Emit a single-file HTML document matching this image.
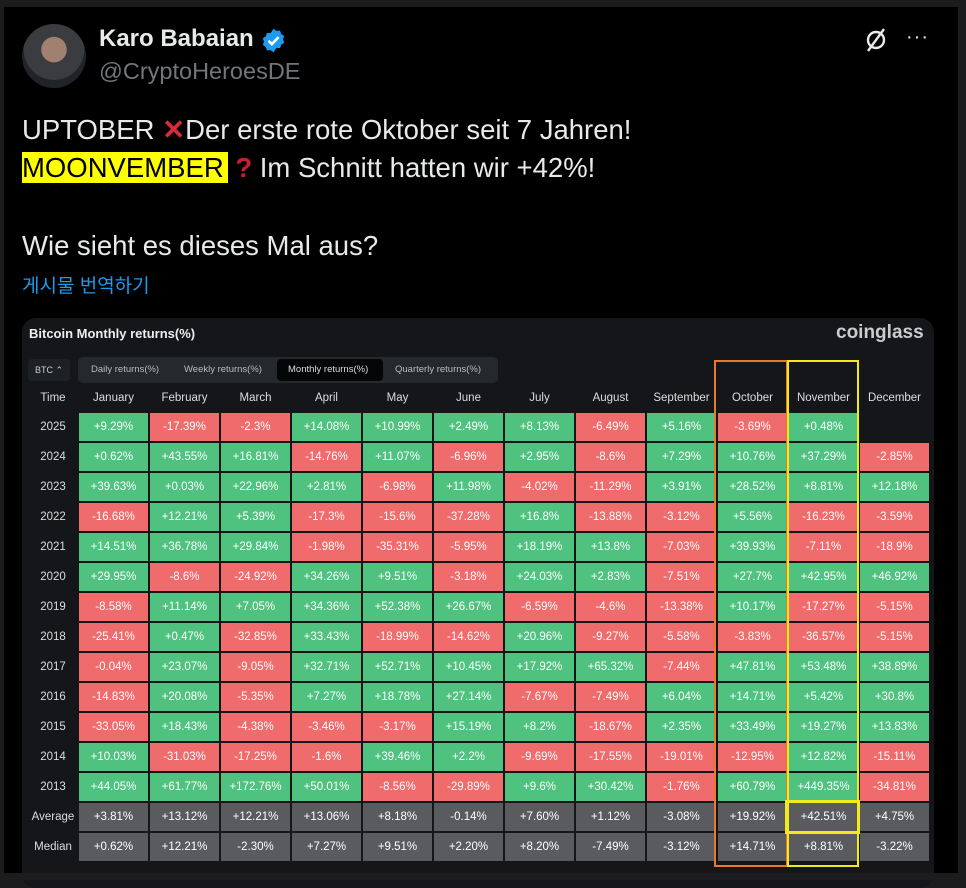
<!DOCTYPE html><html><head><meta charset="utf-8"><style>
body{margin:0;width:966px;height:880px;background:#1c1c1e;overflow:hidden;font-family:"Liberation Sans","Noto Sans CJK KR",sans-serif;position:relative}
#main{position:absolute;left:4px;top:7px;width:954px;height:866px;background:#000}
.a{position:absolute}
.t{color:#e7e9ea;font-size:27.5px;white-space:nowrap}
#card{position:absolute;left:22px;top:318px;width:912px;height:570px;background:#141619;border-radius:14px}
.row{position:absolute;left:28px;height:30px;display:flex}
.row div{width:69px;height:28px;margin:1px;line-height:28px;text-align:center;color:#fff;font-size:11.5px}
.row div:first-child{width:48px;color:#ddd;font-size:11.5px}
.g{background:#4ec27e}.r{background:#f06b6b}.n{background:#5a5b5f}
.hd div{color:#ddd!important;font-size:11.5px}
</style></head><body>
<div id="main"></div>
<div class="a" style="left:22px;top:24px;width:64px;height:64px;border-radius:50%;background:radial-gradient(circle at 50% 40%,#a08070 0 25%,#3a3c40 26% 60%,#202428 61%)"></div>
<div class="a" style="left:99px;top:25px;color:#e7e9ea;font-size:24px;font-weight:bold">Karo Babaian</div>
<svg class="a" style="left:260px;top:27px" width="27" height="27" viewBox="0 0 24 24"><path fill="#1d9bf0" d="M12 1.5l2.6 1.9 3.2-.2 1 3 2.7 1.8-1 3 1 3-2.7 1.8-1 3-3.2-.2L12 22.5l-2.6-1.9-3.2.2-1-3L2.5 16l1-3-1-3 2.7-1.8 1-3 3.2.2z"/><path d="M7.5 12.2l3 3 6-6.2" stroke="#fff" stroke-width="2.3" fill="none"/></svg>
<div class="a" style="left:99px;top:58px;color:#71767b;font-size:23.5px">@CryptoHeroesDE</div>
<svg class="a" style="left:862px;top:26px" width="28" height="28" viewBox="0 0 28 28"><circle cx="14" cy="14" r="8" stroke="#e7e9ea" stroke-width="2.4" fill="none"/><path d="M22 3L6 25" stroke="#e7e9ea" stroke-width="2.4"/></svg>
<div class="a" style="left:906px;top:26px;color:#e7e9ea;font-size:20px;letter-spacing:1px">···</div>
<div class="a t" style="left:22px;top:114px">UPTOBER <span style="color:#e0283c;font-weight:bold">✕</span>Der erste rote Oktober seit 7 Jahren!</div>
<div class="a t" style="left:22px;top:152px"><span style="background:#ffff00;color:#000;padding:0 4px 0 0">MOONVEMBER</span> <span style="color:#c81e33;font-weight:bold">?</span> Im Schnitt hatten wir +42%!</div>
<div class="a t" style="left:22px;top:230px">Wie sieht es dieses Mal aus?</div>
<div class="a" style="left:22px;top:271px;color:#1d9bf0;font-size:19px">게시물 번역하기</div>
<div id="card"></div>
<div class="a" style="left:29px;top:326px;color:#eee;font-size:13px;font-weight:bold">Bitcoin Monthly returns(%)</div>
<div class="a" style="left:836px;top:322px;color:#ccc;font-size:19px;font-weight:bold">coinglass</div>
<div class="a" style="left:28px;top:359px;width:42px;height:22px;border-radius:4px;background:#1d2024;color:#ccc;font-size:9px;line-height:22px;text-align:center">BTC ⌃</div>
<div class="a" style="left:78px;top:357px;width:420px;height:26px;border-radius:5px;background:#25282d"></div>
<div class="a" style="left:277px;top:359px;width:106px;height:22px;border-radius:4px;background:#050607"></div>
<div class="a" style="left:91px;top:364px;color:#bbb;font-size:9.5px">Daily returns(%)</div>
<div class="a" style="left:184px;top:364px;color:#bbb;font-size:9.5px">Weekly returns(%)</div>
<div class="a" style="left:288px;top:364px;color:#ddd;font-size:9.5px">Monthly returns(%)</div>
<div class="a" style="left:395px;top:364px;color:#bbb;font-size:9.5px">Quarterly returns(%)</div>
<div class="row hd" style="top:383px"><div>Time</div><div>January</div><div>February</div><div>March</div><div>April</div><div>May</div><div>June</div><div>July</div><div>August</div><div>September</div><div>October</div><div>November</div><div>December</div></div>
<div class="row" style="top:412px"><div>2025</div><div class="g">+9.29%</div><div class="r">-17.39%</div><div class="r">-2.3%</div><div class="g">+14.08%</div><div class="g">+10.99%</div><div class="g">+2.49%</div><div class="g">+8.13%</div><div class="r">-6.49%</div><div class="g">+5.16%</div><div class="r">-3.69%</div><div class="g">+0.48%</div><div></div></div>
<div class="row" style="top:442px"><div>2024</div><div class="g">+0.62%</div><div class="g">+43.55%</div><div class="g">+16.81%</div><div class="r">-14.76%</div><div class="g">+11.07%</div><div class="r">-6.96%</div><div class="g">+2.95%</div><div class="r">-8.6%</div><div class="g">+7.29%</div><div class="g">+10.76%</div><div class="g">+37.29%</div><div class="r">-2.85%</div></div>
<div class="row" style="top:472px"><div>2023</div><div class="g">+39.63%</div><div class="g">+0.03%</div><div class="g">+22.96%</div><div class="g">+2.81%</div><div class="r">-6.98%</div><div class="g">+11.98%</div><div class="r">-4.02%</div><div class="r">-11.29%</div><div class="g">+3.91%</div><div class="g">+28.52%</div><div class="g">+8.81%</div><div class="g">+12.18%</div></div>
<div class="row" style="top:502px"><div>2022</div><div class="r">-16.68%</div><div class="g">+12.21%</div><div class="g">+5.39%</div><div class="r">-17.3%</div><div class="r">-15.6%</div><div class="r">-37.28%</div><div class="g">+16.8%</div><div class="r">-13.88%</div><div class="r">-3.12%</div><div class="g">+5.56%</div><div class="r">-16.23%</div><div class="r">-3.59%</div></div>
<div class="row" style="top:532px"><div>2021</div><div class="g">+14.51%</div><div class="g">+36.78%</div><div class="g">+29.84%</div><div class="r">-1.98%</div><div class="r">-35.31%</div><div class="r">-5.95%</div><div class="g">+18.19%</div><div class="g">+13.8%</div><div class="r">-7.03%</div><div class="g">+39.93%</div><div class="r">-7.11%</div><div class="r">-18.9%</div></div>
<div class="row" style="top:562px"><div>2020</div><div class="g">+29.95%</div><div class="r">-8.6%</div><div class="r">-24.92%</div><div class="g">+34.26%</div><div class="g">+9.51%</div><div class="r">-3.18%</div><div class="g">+24.03%</div><div class="g">+2.83%</div><div class="r">-7.51%</div><div class="g">+27.7%</div><div class="g">+42.95%</div><div class="g">+46.92%</div></div>
<div class="row" style="top:592px"><div>2019</div><div class="r">-8.58%</div><div class="g">+11.14%</div><div class="g">+7.05%</div><div class="g">+34.36%</div><div class="g">+52.38%</div><div class="g">+26.67%</div><div class="r">-6.59%</div><div class="r">-4.6%</div><div class="r">-13.38%</div><div class="g">+10.17%</div><div class="r">-17.27%</div><div class="r">-5.15%</div></div>
<div class="row" style="top:622px"><div>2018</div><div class="r">-25.41%</div><div class="g">+0.47%</div><div class="r">-32.85%</div><div class="g">+33.43%</div><div class="r">-18.99%</div><div class="r">-14.62%</div><div class="g">+20.96%</div><div class="r">-9.27%</div><div class="r">-5.58%</div><div class="r">-3.83%</div><div class="r">-36.57%</div><div class="r">-5.15%</div></div>
<div class="row" style="top:652px"><div>2017</div><div class="r">-0.04%</div><div class="g">+23.07%</div><div class="r">-9.05%</div><div class="g">+32.71%</div><div class="g">+52.71%</div><div class="g">+10.45%</div><div class="g">+17.92%</div><div class="g">+65.32%</div><div class="r">-7.44%</div><div class="g">+47.81%</div><div class="g">+53.48%</div><div class="g">+38.89%</div></div>
<div class="row" style="top:682px"><div>2016</div><div class="r">-14.83%</div><div class="g">+20.08%</div><div class="r">-5.35%</div><div class="g">+7.27%</div><div class="g">+18.78%</div><div class="g">+27.14%</div><div class="r">-7.67%</div><div class="r">-7.49%</div><div class="g">+6.04%</div><div class="g">+14.71%</div><div class="g">+5.42%</div><div class="g">+30.8%</div></div>
<div class="row" style="top:712px"><div>2015</div><div class="r">-33.05%</div><div class="g">+18.43%</div><div class="r">-4.38%</div><div class="r">-3.46%</div><div class="r">-3.17%</div><div class="g">+15.19%</div><div class="g">+8.2%</div><div class="r">-18.67%</div><div class="g">+2.35%</div><div class="g">+33.49%</div><div class="g">+19.27%</div><div class="g">+13.83%</div></div>
<div class="row" style="top:742px"><div>2014</div><div class="g">+10.03%</div><div class="r">-31.03%</div><div class="r">-17.25%</div><div class="r">-1.6%</div><div class="g">+39.46%</div><div class="g">+2.2%</div><div class="r">-9.69%</div><div class="r">-17.55%</div><div class="r">-19.01%</div><div class="r">-12.95%</div><div class="g">+12.82%</div><div class="r">-15.11%</div></div>
<div class="row" style="top:772px"><div>2013</div><div class="g">+44.05%</div><div class="g">+61.77%</div><div class="g">+172.76%</div><div class="g">+50.01%</div><div class="r">-8.56%</div><div class="r">-29.89%</div><div class="g">+9.6%</div><div class="g">+30.42%</div><div class="r">-1.76%</div><div class="g">+60.79%</div><div class="g">+449.35%</div><div class="r">-34.81%</div></div>
<div class="row" style="top:802px"><div>Average</div><div class="n">+3.81%</div><div class="n">+13.12%</div><div class="n">+12.21%</div><div class="n">+13.06%</div><div class="n">+8.18%</div><div class="n">-0.14%</div><div class="n">+7.60%</div><div class="n">+1.12%</div><div class="n">-3.08%</div><div class="n">+19.92%</div><div class="n">+42.51%</div><div class="n">+4.75%</div></div>
<div class="row" style="top:832px"><div>Median</div><div class="n">+0.62%</div><div class="n">+12.21%</div><div class="n">-2.30%</div><div class="n">+7.27%</div><div class="n">+9.51%</div><div class="n">+2.20%</div><div class="n">+8.20%</div><div class="n">-7.49%</div><div class="n">-3.12%</div><div class="n">+14.71%</div><div class="n">+8.81%</div><div class="n">-3.22%</div></div>
<div class="a" style="left:714px;top:360px;width:70px;height:503px;border:2px solid #e8782a"></div>
<div class="a" style="left:787px;top:360px;width:68px;height:503px;border:2px solid #f2ea1c"></div>
<div class="a" style="left:785px;top:800px;width:69px;height:28px;border:3px solid #f2ea1c"></div>
<div class="a" style="left:0;top:873px;width:966px;height:7px;background:#1c1c1e"></div>
</body></html>
